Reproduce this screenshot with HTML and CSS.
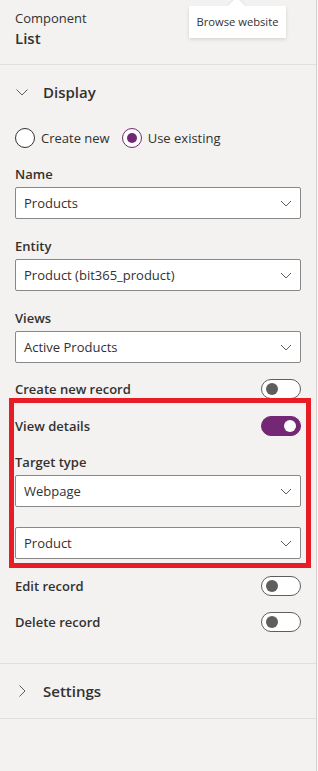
FILE: index.html
```html
<!DOCTYPE html>
<html lang="en">
<head>
    <meta charset="UTF-8">
    <meta name="viewport" content="width=device-width, initial-scale=1.0">
    <title>Component - List</title>
    <link rel="stylesheet" href="styles.css">
</head>
<body>
    <aside class="panel">
        <header class="panel-header">
            <div class="kind">Component</div>
            <div class="name">List</div>
        </header>

        <section class="group open">
            <button class="group-head">
                <svg class="chev" width="12" height="12" viewBox="0 0 12 12"><path d="M0.5 3.5 L6 9 L11.5 3.5" /></svg>
                <span>Display</span>
            </button>
            <div class="group-body">
                <div class="radios">
                    <label class="radio"><span class="dot"></span>Create new</label>
                    <label class="radio checked"><span class="dot"></span>Use existing</label>
                </div>

                <div class="field">
                    <div class="label">Name</div>
                    <div class="select">Products<svg width="12" height="12" viewBox="0 0 12 12"><path d="M1 4 L6 9 L11 4" /></svg></div>
                </div>
                <div class="field">
                    <div class="label">Entity</div>
                    <div class="select">Product (bit365_product)<svg width="12" height="12" viewBox="0 0 12 12"><path d="M1 4 L6 9 L11 4" /></svg></div>
                </div>
                <div class="field">
                    <div class="label">Views</div>
                    <div class="select">Active Products<svg width="12" height="12" viewBox="0 0 12 12"><path d="M1 4 L6 9 L11 4" /></svg></div>
                </div>

                <div class="toggle-row">
                    <span>Create new record</span>
                    <span class="toggle"></span>
                </div>
                <div class="toggle-row near">
                    <span>View details</span>
                    <span class="toggle on"></span>
                </div>
                <div class="field">
                    <div class="label normal">Target type</div>
                    <div class="select">Webpage<svg width="12" height="12" viewBox="0 0 12 12"><path d="M1 4 L6 9 L11 4" /></svg></div>
                </div>
                <div class="select spaced">Product<svg width="12" height="12" viewBox="0 0 12 12"><path d="M1 4 L6 9 L11 4" /></svg></div>
                <div class="toggle-row near">
                    <span>Edit record</span>
                    <span class="toggle"></span>
                </div>
                <div class="toggle-row">
                    <span>Delete record</span>
                    <span class="toggle"></span>
                </div>
            </div>
        </section>

        <section class="group">
            <button class="group-head">
                <svg class="chev" width="12" height="12" viewBox="0 0 12 12"><path d="M3.5 0.5 L9 6 L3.5 11.5" /></svg>
                <span>Settings</span>
            </button>
        </section>

        <div class="highlight"></div>
        <div class="tooltip">Browse website</div>
    </aside>
</body>
</html>
```

FILE: styles.css
```css
* { margin: 0; padding: 0; box-sizing: border-box; }
body {
    font-family: "Segoe UI", "Open Sans", sans-serif;
    font-size: 13px;
    color: #323130;
    background: #faf9f8;
}
.panel {
    position: relative;
    width: 317px;
    min-height: 771px;
    background: #f3f2f1;
    border-right: 1px solid #d2d0ce;
}
.panel-header {
    padding: 8px 15px 16px;
    border-bottom: 1px solid #e1dfdd;
    line-height: 20px;
}
.kind {
    font-size: 13px;
}
.name {
    font-size: 15px;
    font-weight: 600;
}
.group {
    border-bottom: 1px solid #e1dfdd;
}
.group-head {
    display: flex;
    align-items: center;
    width: 100%;
    height: 54px;
    padding-left: 16px;
    background: none;
    border: none;
    font-family: inherit;
    font-size: 15px;
    font-weight: 600;
    color: #323130;
    text-align: left;
}
.group-head .chev {
    margin-right: 15px;
}
.chev path, .select path {
    fill: none;
    stroke: #605e5c;
    stroke-width: 1;
}
.group-body {
    padding: 9px 15px 31px;
}
.radios {
    display: flex;
    gap: 12px;
    height: 20px;
    align-items: center;
}
.radio {
    display: flex;
    align-items: center;
    gap: 6px;
    line-height: 20px;
}
.radio .dot {
    width: 20px;
    height: 20px;
    border: 1px solid #323130;
    border-radius: 50%;
    background: white;
    display: flex;
    align-items: center;
    justify-content: center;
}
.radio.checked .dot {
    border-color: #742774;
}
.radio.checked .dot::after {
    content: '';
    width: 10px;
    height: 10px;
    border-radius: 50%;
    background: #742774;
}
.field {
    margin-top: 16px;
}
.field + .field {
    margin-top: 17px;
}
.label {
    font-weight: 600;
    line-height: 20px;
    margin-bottom: 3px;
}
.label.normal {
    margin-top: 16px;
}
.select {
    display: flex;
    align-items: center;
    justify-content: space-between;
    height: 32px;
    padding: 0 8px 0 8px;
    background: white;
    border: 1px solid #8a8886;
    border-radius: 2px;
}
.select.spaced {
    margin-top: 20px;
}
.toggle-row {
    display: flex;
    justify-content: space-between;
    align-items: center;
    height: 20px;
    margin-top: 16px;
    font-weight: 600;
}
.toggle-row.near {
    margin-top: 17px;
}
.toggle {
    position: relative;
    width: 40px;
    height: 20px;
    border: 1px solid #605e5c;
    border-radius: 10px;
    background: white;
}
.toggle::after {
    content: '';
    position: absolute;
    top: 3px;
    left: 4px;
    width: 12px;
    height: 12px;
    border-radius: 50%;
    background: #605e5c;
}
.toggle.on {
    background: #742774;
    border-color: #742774;
}
.toggle.on::after {
    left: auto;
    right: 4px;
    background: white;
}
.highlight {
    position: absolute;
    left: 9px;
    top: 398px;
    width: 302px;
    height: 170px;
    border: 5px solid #e81c24;
}
.tooltip {
    position: absolute;
    left: 189px;
    top: 6px;
    width: 97px;
    height: 32px;
    background: white;
    font-size: 11.2px;
    line-height: 32px;
    text-align: center;
    box-shadow: 0 1.6px 3.6px rgba(0, 0, 0, 0.13), 0 0.3px 0.9px rgba(0, 0, 0, 0.11);
}
.tooltip::before {
    content: '';
    position: absolute;
    top: -6px;
    left: 41px;
    width: 13px;
    height: 13px;
    background: white;
    transform: rotate(45deg);
    box-shadow: -1px -1px 2px rgba(0, 0, 0, 0.06);
}
```
